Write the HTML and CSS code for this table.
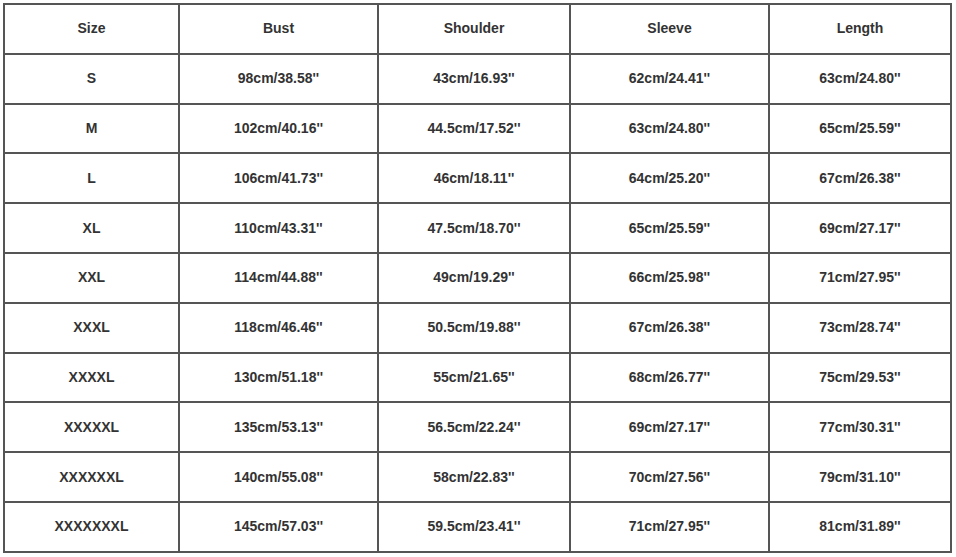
FILE: index.html
```html
<!DOCTYPE html>
<html>
<head>
<meta charset="utf-8">
<link rel="stylesheet" href="styles.css">
</head>
<body>
<table class="size-table">
  <colgroup>
    <col class="c1"><col class="c2"><col class="c3"><col class="c4"><col class="c5">
  </colgroup>
  <thead>
    <tr><th>Size</th><th>Bust</th><th>Shoulder</th><th>Sleeve</th><th>Length</th></tr>
  </thead>
  <tbody>
    <tr><td>S</td><td>98cm/38.58''</td><td>43cm/16.93''</td><td>62cm/24.41''</td><td>63cm/24.80''</td></tr>
    <tr><td>M</td><td>102cm/40.16''</td><td>44.5cm/17.52''</td><td>63cm/24.80''</td><td>65cm/25.59''</td></tr>
    <tr><td>L</td><td>106cm/41.73''</td><td>46cm/18.11''</td><td>64cm/25.20''</td><td>67cm/26.38''</td></tr>
    <tr><td>XL</td><td>110cm/43.31''</td><td>47.5cm/18.70''</td><td>65cm/25.59''</td><td>69cm/27.17''</td></tr>
    <tr><td>XXL</td><td>114cm/44.88''</td><td>49cm/19.29''</td><td>66cm/25.98''</td><td>71cm/27.95''</td></tr>
    <tr><td>XXXL</td><td>118cm/46.46''</td><td>50.5cm/19.88''</td><td>67cm/26.38''</td><td>73cm/28.74''</td></tr>
    <tr><td>XXXXL</td><td>130cm/51.18''</td><td>55cm/21.65''</td><td>68cm/26.77''</td><td>75cm/29.53''</td></tr>
    <tr><td>XXXXXL</td><td>135cm/53.13''</td><td>56.5cm/22.24''</td><td>69cm/27.17''</td><td>77cm/30.31''</td></tr>
    <tr><td>XXXXXXL</td><td>140cm/55.08''</td><td>58cm/22.83''</td><td>70cm/27.56''</td><td>79cm/31.10''</td></tr>
    <tr><td>XXXXXXXL</td><td>145cm/57.03''</td><td>59.5cm/23.41''</td><td>71cm/27.95''</td><td>81cm/31.89''</td></tr>
  </tbody>
</table>
</body>
</html>
```
FILE: styles.css
```css
html, body {
  margin: 0;
  padding: 0;
  background: #ffffff;
}
body {
  padding: 3px 0 0 3px;
}
.size-table {
  border-collapse: collapse;
  table-layout: fixed;
  width: 949px;
  font-family: "Liberation Sans", Arial, sans-serif;
  font-weight: bold;
  font-size: 14px;
  color: #333333;
}
.c1 { width: 175px; }
.c2 { width: 199px; }
.c3 { width: 192px; }
.c4 { width: 199px; }
.c5 { width: 182px; }
.size-table th,
.size-table td {
  border: 2px solid #555555;
  height: 46.8px;
  padding: 0 0 1px 0;
  text-align: center;
  vertical-align: middle;
  font-weight: bold;
}
```
